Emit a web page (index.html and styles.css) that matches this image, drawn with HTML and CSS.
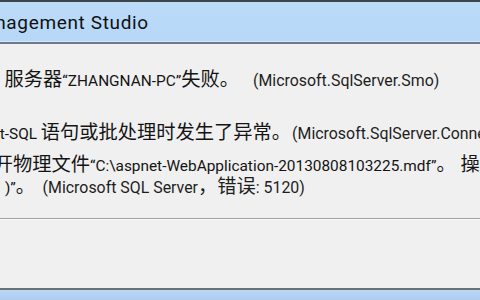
FILE: index.html
```html
<!DOCTYPE html>
<html lang="zh-CN">
<head>
<meta charset="utf-8">
<title>Microsoft SQL Server Management Studio</title>
<link rel="stylesheet" href="styles.css">
</head>
<body>
<div class="window">
  <div class="titlebar">
    <span class="title">Management Studio</span>
  </div>
  <div class="content">
    <div class="msg m1">连接到<span class="lat"> </span>服务器<span class="lat">“ZHANGNAN-PC”</span>失败。<span class="src">(Microsoft.SqlServer.Smo)</span></div>
    <div class="msg m2">执行<span class="lat sql"> Transact-SQL </span>语句或批处理时发生了异常。<span class="src">(Microsoft.SqlServer.ConnectionInfo)</span></div>
    <div class="msg m3">无法打开物理文件<span class="lat">“C:\aspnet-WebApplication-20130808103225.mdf”</span>。<span class="lat gap"> </span>操作系统错误<span class="lat"> 5:“5(</span>拒绝访问。</div>
    <div class="msg m4"><span class="lat">)”</span>。<span class="src">(Microsoft SQL Server<span class="cjk">，错误</span>: 5120)</span></div>
  </div>
  <div class="separator"></div>
  <div class="buttons-area"></div>
  <div class="bottombar"></div>
</div>
</body>
</html>
```
FILE: styles.css
```css
html, body {
  margin: 0;
  padding: 0;
}
body {
  width: 480px;
  height: 300px;
  overflow: hidden;
  background: #f0f0f0;
}
.window {
  display: flex;
  flex-direction: column;
  width: 480px;
  height: 300px;
  overflow: hidden;
}
.titlebar {
  height: 39px;
  border-top: 2px solid #3f4449;
  border-bottom: 1px solid #d6e7f7;
  box-shadow: 0 2px 0 #6e7b86;
  margin-bottom: 2px;
  background: linear-gradient(#bcdbf8, #b6d7f8);
  display: flex;
  align-items: center;
  white-space: nowrap;
}
.title {
  font-family: Roboto, "Noto Sans", sans-serif;
  font-size: 19px;
  letter-spacing: 0.65px;
  color: #111;
  margin-left: -33px;
  padding-top: 1px;
}
.content {
  font-family: "Noto Sans CJK SC", sans-serif;
  font-size: 19.25px;
  color: #141414;
  white-space: nowrap;
  display: flex;
  flex-direction: column;
  padding-top: 23px;
  text-autospace: no-autospace;
}
.msg {
  line-height: 22px;
  height: 22px;
}
.lat {
  font-family: Roboto, sans-serif;
  font-size: 15.4px;
}
.cjk {
  font-family: "Noto Sans CJK SC", sans-serif;
  font-size: 19.25px;
}
.src {
  font-family: Roboto, "Noto Sans CJK SC", sans-serif;
  font-size: 15.9px;
  color: #1e1e1e;
}
.m1 { margin-left: -57px; }
.m1 .src { margin-left: 14px; }
.m2 { margin-left: -97.4px; margin-top: 31px; }
.m2 .src { margin-left: 1px; }
.m3 { margin-left: -64px; margin-top: 10px; }
.m3 .gap { margin-right: 1px; }
.m4 { margin-left: 5px; }
.m4 .src { margin-left: 7.5px; }
.separator {
  margin-top: 22px;
  height: 1px;
  background: #a0a0a0;
  border-bottom: 1px solid #fcfcfc;
}
.buttons-area {
  flex: 1;
}
.bottombar {
  height: 10px;
  border-top: 2px solid #6b7077;
  background: linear-gradient(#b9d8f8, #aecdee);
}
```
